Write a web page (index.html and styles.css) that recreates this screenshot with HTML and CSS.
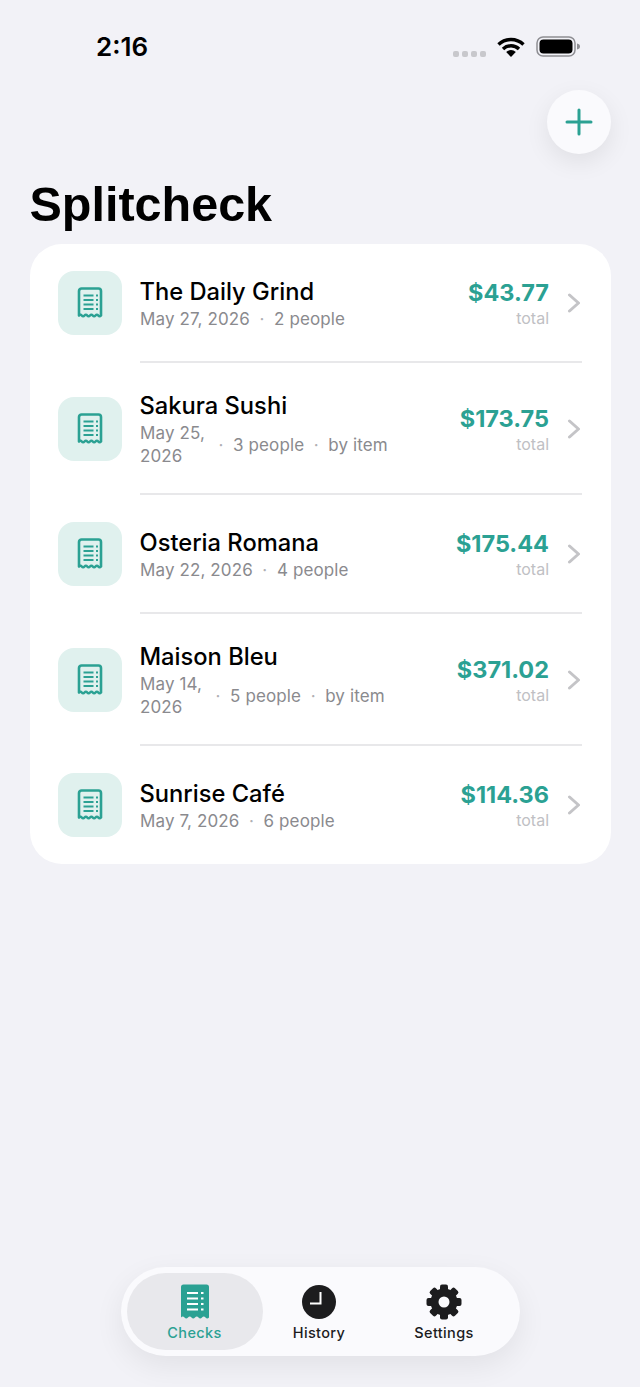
FILE: index.html
```html
<!doctype html>
<html lang="en">
  <head>
    <meta charset="UTF-8" />
    <title>Splitcheck</title>
    <link rel="stylesheet" href="styles.css">
  </head>
  <body>
    <svg class="defs" width="0" height="0">
      <symbol id="receipt" viewBox="0 0 26 32">
        <path d="M2 28.500V4a2.500 2.500 0 0 1 2.500-2.500h17A2.500 2.500 0 0 1 24 4v24.500q-1.400 1.600-2.750 0t-2.750 0-2.750 0-2.750 0-2.750 0-2.750 0-2.750 0-2.750 0z" fill="none" stroke="currentColor" stroke-width="2.600" stroke-linejoin="round"/>
        <path d="M6.500 8.500h10M6.500 13h10M6.500 17.500h10M6.500 22h10M19 8.500h2M19 13h2M19 17.500h2M19 22h2" stroke="currentColor" stroke-width="2" fill="none"/>
      </symbol>
      <symbol id="chevron" viewBox="0 0 14 20">
        <path d="M2.500 2l9 8-9 8" fill="none" stroke="currentColor" stroke-width="3" stroke-linecap="round" stroke-linejoin="round"/>
      </symbol>
    </svg>

    <div class="status">
      <span class="time">2:16</span>
      <div class="status-icons">
        <div class="signal"><i></i><i></i><i></i><i></i></div>
        <svg class="wifi" width="28" height="20" viewBox="0 0 28 20">
          <path d="M1.500 7.500a18 18 0 0 1 25 0M6 12a11.500 11.500 0 0 1 16 0" fill="none" stroke="#000" stroke-width="3.400"/>
          <path d="M14 20l-4.800-5a7 7 0 0 1 9.600 0z" fill="#000"/>
        </svg>
        <svg class="battery" width="45" height="21" viewBox="0 0 45 21">
          <rect x="1" y="1" width="38" height="19" rx="6" fill="none" stroke="#8e8e93" stroke-width="1.500"/>
          <rect x="3.500" y="3.500" width="33" height="14" rx="4" fill="#000"/>
          <path d="M41 7.500c2 .3 3 1.500 3 3s-1 2.700-3 3z" fill="#8e8e93"/>
        </svg>
      </div>
    </div>

    <div class="top">
      <button class="add">
        <svg width="28" height="28" viewBox="0 0 28 28">
          <path d="M14 2v24M2 14h24" stroke="#2ba193" stroke-width="3" stroke-linecap="round"/>
        </svg>
      </button>
    </div>

    <h1>Splitcheck</h1>

    <div class="card">
      <div class="row">
        <div class="tile"><svg width="26" height="32"><use href="#receipt"/></svg></div>
        <div class="info">
          <div class="name">The Daily Grind</div>
          <div class="meta"><span>May 27, 2026</span><span class="dot">·</span><span>2 people</span></div>
        </div>
        <div class="price"><div class="amount">$43.77</div><div class="total">total</div></div>
        <svg class="chevron" width="14" height="20"><use href="#chevron"/></svg>
      </div>
      <div class="row">
        <div class="tile"><svg width="26" height="32"><use href="#receipt"/></svg></div>
        <div class="info">
          <div class="name">Sakura Sushi</div>
          <div class="meta"><span class="date-wrap">May 25,<br>2026</span><span class="dot">·</span><span>3 people</span><span class="dot">·</span><span>by item</span></div>
        </div>
        <div class="price"><div class="amount">$173.75</div><div class="total">total</div></div>
        <svg class="chevron" width="14" height="20"><use href="#chevron"/></svg>
      </div>
      <div class="row">
        <div class="tile"><svg width="26" height="32"><use href="#receipt"/></svg></div>
        <div class="info">
          <div class="name">Osteria Romana</div>
          <div class="meta"><span>May 22, 2026</span><span class="dot">·</span><span>4 people</span></div>
        </div>
        <div class="price"><div class="amount">$175.44</div><div class="total">total</div></div>
        <svg class="chevron" width="14" height="20"><use href="#chevron"/></svg>
      </div>
      <div class="row">
        <div class="tile"><svg width="26" height="32"><use href="#receipt"/></svg></div>
        <div class="info">
          <div class="name">Maison Bleu</div>
          <div class="meta"><span class="date-wrap">May 14,<br>2026</span><span class="dot">·</span><span>5 people</span><span class="dot">·</span><span>by item</span></div>
        </div>
        <div class="price"><div class="amount">$371.02</div><div class="total">total</div></div>
        <svg class="chevron" width="14" height="20"><use href="#chevron"/></svg>
      </div>
      <div class="row">
        <div class="tile"><svg width="26" height="32"><use href="#receipt"/></svg></div>
        <div class="info">
          <div class="name">Sunrise Café</div>
          <div class="meta"><span>May 7, 2026</span><span class="dot">·</span><span>6 people</span></div>
        </div>
        <div class="price"><div class="amount">$114.36</div><div class="total">total</div></div>
        <svg class="chevron" width="14" height="20"><use href="#chevron"/></svg>
      </div>
    </div>

    <div class="tabbar">
      <div class="tab active">
        <svg width="30" height="36" viewBox="0 0 30 36">
          <path d="M1 33.500V3a2.500 2.500 0 0 1 2.500-2.500h23A2.500 2.500 0 0 1 29 3v30.500q-1.750 2-3.500 0t-3.500 0-3.500 0-3.500 0-3.500 0-3.500 0-3.500 0-3.500 0z" fill="#2ba193"/>
          <path d="M7 9h11M7 14.500h11M7 20h11M7 25.500h11M21 9h2.500M21 14.500h2.500M21 20h2.500M21 25.500h2.500" stroke="#fff" stroke-width="1.800"/>
        </svg>
        <span>Checks</span>
      </div>
      <div class="tab">
        <svg width="36" height="36" viewBox="0 0 36 36">
          <circle cx="18" cy="18" r="17" fill="#1c1c1e"/>
          <path d="M19.500 8v11.500H9" fill="none" stroke="#fff" stroke-width="2"/>
        </svg>
        <span>History</span>
      </div>
      <div class="tab">
        <svg width="36" height="36" viewBox="0 0 36 36">
          <g fill="#1c1c1e">
            <rect x="14" y="0.500" width="8" height="35" rx="2"/>
            <rect x="14" y="0.500" width="8" height="35" rx="2" transform="rotate(45 18 18)"/>
            <rect x="14" y="0.500" width="8" height="35" rx="2" transform="rotate(90 18 18)"/>
            <rect x="14" y="0.500" width="8" height="35" rx="2" transform="rotate(135 18 18)"/>
          </g>
          <circle cx="18" cy="18" r="9.500" fill="none" stroke="#1c1c1e" stroke-width="8"/>
          <circle cx="18" cy="18" r="5.500" fill="#fafafd"/>
        </svg>
        <span>Settings</span>
      </div>
    </div>
  </body>
</html>
```
FILE: styles.css
```css
* {
  box-sizing: border-box;
}
body {
  margin: 0;
  width: 640px;
  height: 1387px;
  background: #f2f2f7;
  font-family: Inter, sans-serif;
  color: #000;
  display: flex;
  flex-direction: column;
  overflow: hidden;
}
.defs {
  position: absolute;
}
.status {
  height: 90px;
  padding: 32px 59px 0 96px;
  display: flex;
  justify-content: space-between;
  align-items: flex-start;
}
.time {
  font-family: Inter, sans-serif;
  font-size: 26px;
  font-weight: 600;
  line-height: 30px;
}
.status-icons {
  display: flex;
  align-items: center;
  gap: 11px;
  margin-top: 4px;
}
.signal {
  display: flex;
  gap: 3px;
  margin-top: 14px;
}
.signal i {
  width: 6px;
  height: 6px;
  border-radius: 2px;
  background: #c8c8cc;
}
.top {
  display: flex;
  justify-content: flex-end;
  padding-right: 29px;
}
.add {
  width: 64px;
  height: 64px;
  border: none;
  border-radius: 50%;
  background: #fafafd;
  box-shadow: 0 8px 24px rgba(0, 0, 0, 0.08);
  display: flex;
  align-items: center;
  justify-content: center;
  padding: 0;
}
h1 {
  margin: 22px 0 12px 29.500px;
  font-family: "Liberation Sans", sans-serif;
  font-size: 48.500px;
  line-height: 56px;
  font-weight: bold;
}
.card {
  margin: 0 29px 0 30px;
  background: #fff;
  border-radius: 32px;
}
.row {
  display: flex;
  align-items: center;
  padding: 26px 30px 26px 28px;
  position: relative;
}
.row + .row {
  padding-top: 27px;
}
.row + .row::before {
  content: "";
  position: absolute;
  left: 110px;
  right: 29px;
  top: -1px;
  height: 2px;
  background: #e8e8ea;
}
.tile {
  width: 64px;
  height: 64px;
  margin: 1px 0;
  flex-shrink: 0;
  border-radius: 16px;
  background: #e0f1ee;
  color: #2ba193;
  display: flex;
  align-items: center;
  justify-content: center;
}
.info {
  flex: 1;
  margin-left: 18px;
}
.name {
  font-size: 23.700px;
  font-weight: 500;
  line-height: 33px;
  margin-left: -0.500px;
}
.meta {
  display: flex;
  align-items: center;
  gap: 9.500px;
  font-size: 17px;
  letter-spacing: 0.120px;
  line-height: 23px;
  color: #8a8a8e;
}
.date-wrap {
  margin-right: 4px;
}
.dot {
  color: #b0b0b4;
}
.price {
  text-align: right;
  margin-right: 18px;
  margin-top: 1px;
}
.amount {
  font-size: 23.500px;
  font-weight: 700;
  line-height: 30px;
  color: #2ba193;
}
.total {
  font-size: 16px;
  line-height: 21px;
  color: #c0c0c4;
}
.chevron {
  color: #c4c4c7;
  flex-shrink: 0;
}
.tabbar {
  margin: auto auto 31px;
  width: 399px;
  height: 89px;
  padding: 6px;
  border-radius: 45px;
  background: #fafafd;
  box-shadow: 0 10px 30px rgba(0, 0, 0, 0.07);
  display: flex;
}
.tab {
  flex: 0 0 125px;
  display: flex;
  flex-direction: column;
  align-items: center;
  padding-top: 11px;
  font-size: 14.500px;
  letter-spacing: 0.350px;
  font-weight: 500;
  color: #1c1c1e;
}
.tab span {
  margin-top: 3px;
  line-height: 20px;
}
.tab.active {
  color: #2ba193;
  background: #e8e8ec;
  border-radius: 39px;
  flex: 0 0 136px;
  margin-right: -6px;
}
```
